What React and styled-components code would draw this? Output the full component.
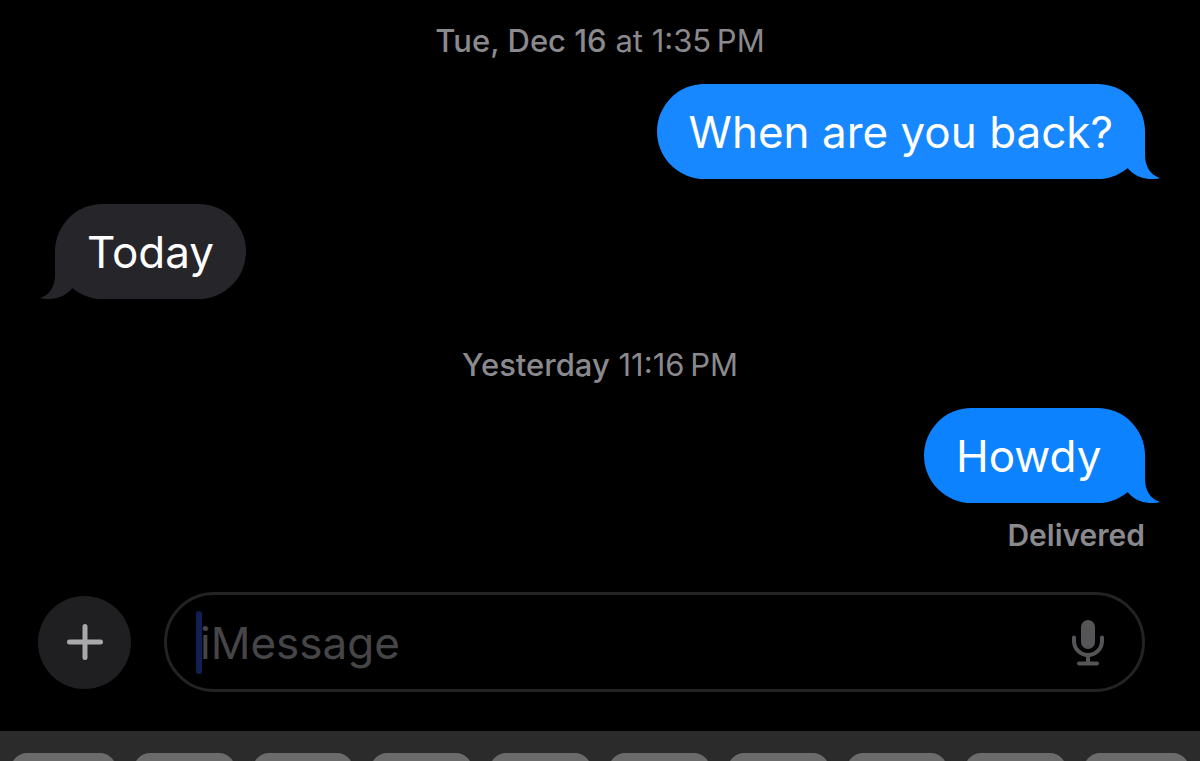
import { useState } from 'react';
import styled, { createGlobalStyle } from 'styled-components';

const GlobalStyle = createGlobalStyle`
  * {
    box-sizing: border-box;
  }

  body {
    margin: 0;
    background: #000;
    font-family: Inter, 'Liberation Sans', sans-serif;
  }
`;

const Page = styled.div`
  display: flex;
  flex-direction: column;
  height: 100vh;
  overflow: hidden;
  background: #000;
`;

const Thread = styled.main`
  display: flex;
  flex-direction: column;
  padding: 20px 55px 0;
`;

const Stamp = styled.time`
  align-self: center;
  margin-top: ${({ $spaced }) => ($spaced ? '45px' : '0')};
  margin-bottom: 22px;
  color: #8a8a8e;
  font-size: 31px;
  line-height: 42px;

  strong {
    font-weight: 500;
  }
`;

const Bubble = styled.div`
  position: relative;
  align-self: ${({ $mine }) => ($mine ? 'flex-end' : 'flex-start')};
  min-width: ${({ $mine }) => ($mine ? '221px' : '0')};
  margin-bottom: ${({ $gap }) => ($gap ? '25px' : '0')};
  padding: 20px 32px 19px;
  border-radius: 48px;
  background: ${({ $color }) => $color};
  color: ${({ $color }) => $color};
  font-size: 44px;
  line-height: 56px;
`;

const BubbleText = styled.span`
  position: relative;
  color: #fff;
`;

const Tail = styled.svg`
  position: absolute;
  bottom: 0;
  ${({ $mine }) => ($mine ? 'right: -15px;' : 'left: -15px; transform: scaleX(-1);')}
  width: 70px;
  height: 48px;
`;

const Status = styled.div`
  align-self: flex-end;
  margin-top: 11px;
  color: #8a8a8e;
  font-size: 30px;
  font-weight: 600;
  line-height: 42px;
`;

const Composer = styled.form`
  display: flex;
  align-items: center;
  gap: 33px;
  padding: 36px 55px 39px 38px;
`;

const AddButton = styled.button`
  display: flex;
  align-items: center;
  justify-content: center;
  flex: none;
  width: 93px;
  height: 93px;
  padding: 0;
  border: 0;
  border-radius: 50%;
  background: #1f1f21;
`;

const Field = styled.div`
  position: relative;
  display: flex;
  align-items: center;
  flex: 1;
  height: 100px;
  padding: 0 38px 0 33px;
  border: 3px solid #232324;
  border-radius: 50px;
`;

const Input = styled.input`
  flex: 1;
  min-width: 0;
  padding: 2px 0 0;
  border: 0;
  outline: none;
  background: transparent;
  color: #fff;
  font-family: inherit;
  font-size: 44px;
  line-height: 56px;

  &::placeholder {
    color: #464648;
    opacity: 1;
  }
`;

const Caret = styled.span`
  position: absolute;
  left: 29px;
  top: 16px;
  width: 6px;
  height: 63px;
  border-radius: 3px;
  background: #131f52;
`;

const MicButton = styled.button`
  display: flex;
  flex: none;
  padding: 0;
  border: 0;
  background: transparent;
`;

const Keyboard = styled.div`
  display: flex;
  flex: 1;
  gap: 18px;
  min-height: 30px;
  padding: 22px 11px 0;
  overflow: hidden;
  background: #2b2b2b;
`;

const Key = styled.button`
  flex: 101;
  height: 126px;
  padding: 0;
  border: 0;
  border-radius: 16px;
  background: #6b6b6b;

  &:first-child,
  &:last-child {
    flex: 105;
  }
`;

const KEYS = 'QWERTYUIOP'.split('');

const Message = ({ mine, color, gap, children }) => (
  <Bubble $mine={mine} $color={color} $gap={gap}>
    <Tail $mine={mine} viewBox="0 0 70 48" aria-hidden="true">
      <path fill="currentColor" d="M55 0V24C55 35 60 44 70 47C59 50 46 47 38 37.500L0 0Z" />
    </Tail>
    <BubbleText>{children}</BubbleText>
  </Bubble>
);

const App = () => {
  const [draft, setDraft] = useState('');

  return (
    <Page>
      <GlobalStyle />
      <Thread>
        <Stamp>
          <strong>Tue, Dec 16</strong> at 1:35{'\u202f'}PM
        </Stamp>
        <Message mine color="#1788ff" gap>
          When are you back?
        </Message>
        <Message color="#26252a">Today</Message>
        <Stamp $spaced>
          <strong>Yesterday</strong> 11:16{'\u202f'}PM
        </Stamp>
        <Message mine color="#0c82ff">
          Howdy
        </Message>
        <Status>Delivered</Status>
      </Thread>

      <Composer onSubmit={(e) => e.preventDefault()}>
        <AddButton type="button" aria-label="Add">
          <svg width="36" height="36" viewBox="0 0 36 36" fill="none" stroke="#a9a9ab" strokeWidth="5" strokeLinecap="round">
            <path d="M18 2.500V33.500M2.500 18H33.500" />
          </svg>
        </AddButton>
        <Field>
          {!draft && <Caret />}
          <Input
            aria-label="iMessage"
            placeholder="iMessage"
            value={draft}
            onChange={(e) => setDraft(e.target.value)}
          />
          <MicButton type="button" aria-label="Dictate">
            <svg width="32" height="48" viewBox="0 -1 32 48" fill="none" stroke="#555557" strokeLinecap="round">
              <rect x="9" y="1" width="14" height="29" rx="7" fill="#555557" stroke="none" />
              <path strokeWidth="4" d="M2 18.500V22a14 14 0 0 0 28 0V18.500" />
              <path strokeWidth="4" strokeLinecap="butt" d="M16 36V44" />
              <path strokeWidth="4" d="M7 44.500H25" />
            </svg>
          </MicButton>
        </Field>
      </Composer>

      <Keyboard>
        {KEYS.map((key) => (
          <Key key={key} type="button" aria-label={key} />
        ))}
      </Keyboard>
    </Page>
  );
};

export default App;
